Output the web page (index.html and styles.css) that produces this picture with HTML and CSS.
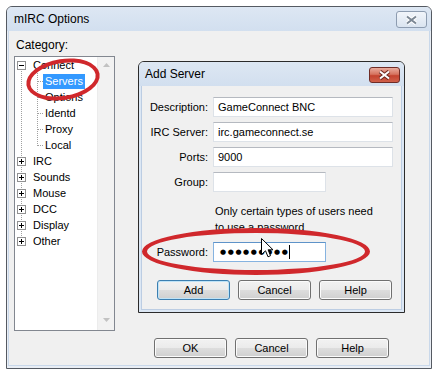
FILE: index.html
```html
<!DOCTYPE html>
<html lang="en">
<head>
  <meta charset="UTF-8">
  <title>mIRC Options</title>
  <link rel="stylesheet" href="styles.css">
</head>
<body>
  <div class="window main-window">
    <div class="titlebar">
      <span class="title">mIRC Options</span>
      <span class="close-btn">
        <svg width="13" height="10" viewBox="0 0 13 10"><path d="M2 1.5l9 7M11 1.5l-9 7" stroke="#fff" stroke-width="4"/><path d="M2 1.5l9 7M11 1.5l-9 7" stroke="#7b8794" stroke-width="2"/></svg>
      </span>
    </div>
    <div class="client">
      <div class="category-label">Category:</div>
      <div class="tree-box">
        <ul class="tree">
          <li>
            <div class="row top-row">
              <svg class="expander" width="9" height="9"><rect x=".5" y=".5" width="8" height="8" fill="#fff" stroke="#919191"/><path d="M2 4.5h5" stroke="#000"/></svg>
              <span class="row-label">Connect</span>
            </div>
            <ul class="children">
              <li class="row child-row selected"><span class="row-label">Servers</span></li>
              <li class="row child-row"><span class="row-label">Options</span></li>
              <li class="row child-row"><span class="row-label">Identd</span></li>
              <li class="row child-row"><span class="row-label">Proxy</span></li>
              <li class="row child-row"><span class="row-label">Local</span></li>
            </ul>
          </li>
          <li class="row top-row">
            <svg class="expander" width="9" height="9"><rect x=".5" y=".5" width="8" height="8" fill="#fff" stroke="#919191"/><path d="M2 4.5h5M4.5 2v5" stroke="#000"/></svg>
            <span class="row-label">IRC</span>
          </li>
          <li class="row top-row">
            <svg class="expander" width="9" height="9"><rect x=".5" y=".5" width="8" height="8" fill="#fff" stroke="#919191"/><path d="M2 4.5h5M4.5 2v5" stroke="#000"/></svg>
            <span class="row-label">Sounds</span>
          </li>
          <li class="row top-row">
            <svg class="expander" width="9" height="9"><rect x=".5" y=".5" width="8" height="8" fill="#fff" stroke="#919191"/><path d="M2 4.5h5M4.5 2v5" stroke="#000"/></svg>
            <span class="row-label">Mouse</span>
          </li>
          <li class="row top-row">
            <svg class="expander" width="9" height="9"><rect x=".5" y=".5" width="8" height="8" fill="#fff" stroke="#919191"/><path d="M2 4.5h5M4.5 2v5" stroke="#000"/></svg>
            <span class="row-label">DCC</span>
          </li>
          <li class="row top-row">
            <svg class="expander" width="9" height="9"><rect x=".5" y=".5" width="8" height="8" fill="#fff" stroke="#919191"/><path d="M2 4.5h5M4.5 2v5" stroke="#000"/></svg>
            <span class="row-label">Display</span>
          </li>
          <li class="row top-row">
            <svg class="expander" width="9" height="9"><rect x=".5" y=".5" width="8" height="8" fill="#fff" stroke="#919191"/><path d="M2 4.5h5M4.5 2v5" stroke="#000"/></svg>
            <span class="row-label">Other</span>
          </li>
        </ul>
        <div class="scrollbar">
          <svg width="7" height="4"><path d="M0 4L3.5 0L7 4Z" fill="#c2c2c2"/></svg>
          <svg width="7" height="4"><path d="M0 0L3.5 4L7 0Z" fill="#c2c2c2"/></svg>
        </div>
      </div>
      <div class="footer">
        <button class="btn">OK</button>
        <button class="btn">Cancel</button>
        <button class="btn">Help</button>
      </div>
    </div>
  </div>

  <!-- Add Server dialog, opened on top of the options window -->
  <div class="window dialog">
    <div class="titlebar">
      <span class="title">Add Server</span>
      <span class="close-btn close-red">
        <svg width="13" height="10" viewBox="0 0 13 10"><path d="M2 1.5l9 7M11 1.5l-9 7" stroke="#6e2a22" stroke-width="4"/><path d="M2 1.5l9 7M11 1.5l-9 7" stroke="#fff" stroke-width="2"/></svg>
      </span>
    </div>
    <div class="client">
      <div class="form">
        <label class="field-label">Description:</label>
        <span class="field long">GameConnect BNC</span>
        <label class="field-label">IRC Server:</label>
        <span class="field long">irc.gameconnect.se</span>
        <label class="field-label">Ports:</label>
        <span class="field long">9000</span>
        <label class="field-label">Group:</label>
        <span class="field short"></span>
        <p class="note">Only certain types of users need<br>to use a password</p>
        <label class="field-label">Password:</label>
        <span class="field short focused"><span class="bullets">●●●●●●●●●</span><span class="caret"></span></span>
      </div>
      <div class="dialog-buttons">
        <button class="btn default">Add</button>
        <button class="btn">Cancel</button>
        <button class="btn">Help</button>
      </div>
    </div>
  </div>

  <div class="mark mark-servers"></div>
  <div class="mark mark-password"></div>

  <svg class="cursor" width="13" height="20" viewBox="0 0 13 20"><path d="M0.5 0.5V16.5L4.5 12.8L7 18.8L9.5 17.7L7.1 11.8H12Z" fill="#fff" stroke="#000"/></svg>
</body>
</html>
```
FILE: styles.css
```css
/* Windows 7 basic style dialogs */
* {
  box-sizing: border-box;
}
body {
  margin: 0;
  width: 446px;
  height: 382px;
  overflow: hidden;
  background-color: #fff;
  font-family: "Liberation Sans", Arial, sans-serif;
  font-size: 11px;
  color: #000;
}
.window {
  display: flex;
  flex-direction: column;
  background-color: #e9eef5;
  border: 1px solid #555a62;
  border-radius: 6px 6px 0 0;
}
.main-window {
  width: 426px;
  margin: 6px 0 0 6px;
}
.titlebar {
  display: flex;
  align-items: flex-start;
  height: 24px;
  flex: none;
  background: linear-gradient(#dde7f3, #d2dfef);
  border-radius: 5px 5px 0 0;
}
.title {
  padding: 5px 0 0 7px;
  font-size: 12px;
  line-height: 15px;
}
.close-btn {
  display: flex;
  align-items: center;
  justify-content: center;
  width: 31px;
  height: 17px;
  margin: 4px 4px 0 auto;
  border: 1px solid #8d9cb0;
  border-radius: 3px;
  background: linear-gradient(#f1f5fa, #dae4f0);
}
.client {
  margin: 0 1px 2px;
  padding: 7px 40px 7px 5px;
  background-color: #f0f0f0;
  border: 1px solid #c9d8ea;
  border-top: none;
}
.category-label {
  padding-left: 2px;
  font-size: 12px;
  line-height: 15px;
}

/* Tree view */
.tree-box {
  display: flex;
  width: 101px;
  height: 275px;
  margin-top: 3px;
  border: 1px solid #828790;
  background-color: #fff;
}
.tree {
  flex: 1;
  list-style: none;
  margin: 0;
  padding: 0;
  background-image: repeating-linear-gradient(to bottom, #a0a0a0 0 1px, transparent 1px 2px);
  background-size: 1px 176px;
  background-position: 6px 8px;
  background-repeat: no-repeat;
}
.row {
  display: flex;
  align-items: center;
  height: 16px;
}
.top-row {
  padding-left: 2px;
}
.expander {
  flex: none;
  margin-right: 7px;
}
.row-label {
  line-height: 15px;
  white-space: nowrap;
}
.children {
  list-style: none;
  margin: 0;
  padding: 0;
  background-image: repeating-linear-gradient(to bottom, #a0a0a0 0 1px, transparent 1px 2px);
  background-size: 1px 72px;
  background-position: 22px 0;
  background-repeat: no-repeat;
}
.child-row {
  padding-left: 22px;
}
.child-row::before {
  content: '';
  width: 6px;
  border-top: 1px dotted #a0a0a0;
}
.child-row .row-label {
  padding: 0 2px;
}
.selected .row-label {
  background-color: #3399ff;
  color: #fff;
}
.scrollbar {
  display: flex;
  flex-direction: column;
  justify-content: space-between;
  align-items: center;
  width: 17px;
  padding: 6px 0 8px;
  background-color: #f2f2f2;
  border-left: 1px solid #ececec;
}

/* Buttons */
.footer {
  display: flex;
  justify-content: flex-end;
  gap: 8px;
  margin-top: 7px;
}
.btn {
  width: 73px;
  height: 20px;
  padding: 0;
  font: inherit;
  color: #000;
  line-height: 18px;
  border: 1px solid #707070;
  border-radius: 3px;
  background: linear-gradient(#f2f2f2, #ebebeb 48%, #dddddd 52%, #cfcfcf);
  box-shadow: inset 0 0 0 1px #fbfbfb;
}
.btn.default {
  border-color: #3c7fb1;
  box-shadow: inset 0 0 0 1px #bfe3f7;
}

/* Add Server dialog */
.dialog {
  position: absolute;
  left: 138px;
  top: 61px;
  width: 267px;
  height: 252px;
  border-color: #2b2b2b;
  background-color: #dce7f4;
}
.dialog .title {
  padding-left: 6px;
}
.close-red {
  height: 16px;
  margin-top: 5px;
  border-color: #6f2c26;
  background: linear-gradient(#e9ab9d, #d6735f 45%, #c4432f 55%, #d0604a);
}
.dialog .client {
  flex: 1;
  margin: 0 2px 2px;
  padding: 11px 0 0;
  border-color: #bccde3;
}
.form {
  display: grid;
  grid-template-columns: 66px auto;
  column-gap: 5px;
  row-gap: 5px;
  align-items: center;
  justify-items: start;
}
.field-label {
  justify-self: end;
  line-height: 15px;
}
.field {
  display: flex;
  align-items: center;
  height: 20px;
  padding-left: 4px;
  background-color: #fff;
  border: 1px solid #dde2e8;
  border-top-color: #b5b9c0;
  white-space: nowrap;
}
.field.long {
  width: 180px;
}
.field.short {
  width: 113px;
}
.field.focused {
  padding-left: 6px;
  border-color: #86b3e0;
  border-top-color: #5e93c9;
}
.bullets {
  font-family: "DejaVu Sans", sans-serif;
  font-size: 7px;
  letter-spacing: 1.6px;
}
.caret {
  width: 1px;
  height: 14px;
  background-color: #000;
}
.note {
  grid-column: 2;
  margin: 6px 0 2px;
  padding-left: 2px;
  line-height: 16px;
}
.dialog-buttons {
  display: flex;
  gap: 8px;
  margin-top: 18px;
  padding-left: 15px;
}

/* Red hand-drawn marks */
.mark {
  position: absolute;
  border: 4px solid #d0282c;
  border-radius: 50%;
}
.mark-servers {
  left: 26px;
  top: 59px;
  width: 74px;
  height: 41px;
  transform: rotate(-9deg);
}
.mark-password {
  left: 142px;
  top: 228px;
  width: 228px;
  height: 47px;
  border-width: 5px;
}
.cursor {
  position: absolute;
  left: 261px;
  top: 238px;
}
```
